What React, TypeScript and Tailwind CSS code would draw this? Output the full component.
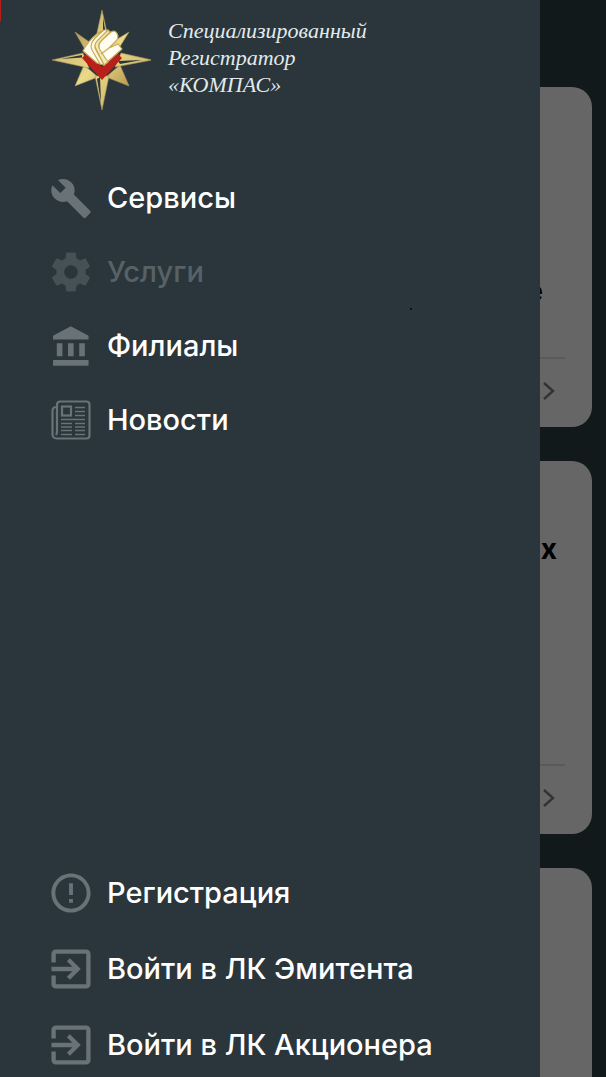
import type { ReactNode } from "react";

type IconProps = { viewBox: string; children: ReactNode };

function Icon({ viewBox, children }: IconProps) {
  return (
    <svg viewBox={viewBox} className="size-10 shrink-0 text-[#697277]" fill="currentColor" aria-hidden="true">
      {children}
    </svg>
  );
}

const wrench = (
  <Icon viewBox="0.8 0.6 22.4 22.4">
    <path d="M22.7 19l-9.1-9.1c.9-2.3.4-5-1.5-6.9-2-2-5-2.4-7.4-1.3L9 6 6 9 1.6 4.7C.4 7.1.9 10.1 2.9 12.1c1.9 1.9 4.6 2.4 6.9 1.5l9.1 9.1c.4.4 1 .4 1.4 0l2.3-2.3c.5-.4.5-1.1.1-1.4z" />
  </Icon>
);

const gear = (
  <Icon viewBox="1.7 1.7 20.6 20.6">
    <path d="M19.43 12.98c.04-.32.07-.64.07-.98s-.03-.66-.07-.98l2.11-1.65c.19-.15.24-.42.12-.64l-2-3.46c-.12-.22-.39-.3-.61-.22l-2.49 1c-.52-.4-1.08-.73-1.69-.98l-.38-2.65C14.46 2.18 14.25 2 14 2h-4c-.25 0-.46.18-.49.42l-.38 2.65c-.61.25-1.17.59-1.69.98l-2.49-1c-.23-.09-.49 0-.61.22l-2 3.46c-.13.22-.07.49.12.64l2.11 1.65c-.04.32-.07.65-.07.98s.03.66.07.98l-2.11 1.65c-.19.15-.24.42-.12.64l2 3.46c.12.22.39.3.61.22l2.49-1c.52.4 1.08.73 1.69.98l.38 2.65c.03.24.24.42.49.42h4c.25 0 .46-.18.49-.42l.38-2.65c.61-.25 1.17-.59 1.69-.98l2.49 1c.23.09.49 0 .61-.22l2-3.46c.12-.22.07-.49-.12-.64l-2.11-1.65zM12 15.5c-1.93 0-3.5-1.57-3.5-3.5s1.57-3.5 3.5-3.5 3.5 1.57 3.5 3.5-1.57 3.5-3.5 3.5z" />
  </Icon>
);

const bank = (
  <Icon viewBox="0.9 0.8 21.4 21.4">
    <path d="M4 10v7h3v-7H4zm6 0v7h3v-7h-3zM2 22h19v-3H2v3zm14-12v7h3v-7h-3zm-4.5-9L2 6v2h19V6l-9.5-5z" />
  </Icon>
);

const newspaper = (
  <Icon viewBox="0 0 40 40">
    <g fill="none" stroke="currentColor">
      <path
        strokeWidth="2.2"
        d="M6 7H5a3.500 3.500 0 0 0-3.500 3.500V34.500a4 4 0 0 0 4 4H35.500a3 3 0 0 0 3-3V4.500a3 3 0 0 0-3-3H9a3 3 0 0 0-3 3V32.500a2 2 0 0 1-1.500 2"
      />
      <rect x="11" y="6.500" width="9" height="9" strokeWidth="2.2" />
      <path
        strokeWidth="1.500"
        d="M24 7.500h10M24 11.500h10M24 15.500h10M10 19.500h24M10 23.500h11M24 23.500h10M10 27h11M24 27h10M10 30.500h11M24 30.500h10M10 34.500h11M24 34.500h10"
      />
    </g>
  </Icon>
);

const alert = (
  <Icon viewBox="1.8 1.8 20.4 20.4">
    <path d="M11 15h2v2h-2v-2zm0-8h2v6h-2V7zm.99-5C6.47 2 2 6.48 2 12s4.47 10 9.99 10C17.52 22 22 17.520 22 12S17.520 2 11.990 2zM12 20c-4.420 0-8-3.580-8-8s3.580-8 8-8 8 3.580 8 8-3.580 8-8 8z" />
  </Icon>
);

const enter = (
  <Icon viewBox="2.8 2.8 18.4 18.4">
    <path d="M10.09 15.59L11.5 17l5-5-5-5-1.41 1.41L12.67 11H3v2h9.67l-2.58 2.59zM19 3H5c-1.11 0-2 .9-2 2v4h2V5h14v14H5v-4H3v4c0 1.100.890 2 2 2h14c1.100 0 2-.9 2-2V5c0-1.100-.9-2-2-2z" />
  </Icon>
);

type Item = { label: string; icon: ReactNode; muted?: boolean };

const sections: Item[] = [
  { label: "Сервисы", icon: wrench },
  { label: "Услуги", icon: gear, muted: true },
  { label: "Филиалы", icon: bank },
  { label: "Новости", icon: newspaper },
];

const account: Item[] = [
  { label: "Регистрация", icon: alert },
  { label: "Войти в ЛК Эмитента", icon: enter },
  { label: "Войти в ЛК Акционера", icon: enter },
];

function MenuLink({ label, icon, muted }: Item) {
  return (
    <li>
      <a
        href="#"
        className={`flex h-10 items-center gap-4 text-[29px] leading-10 font-medium whitespace-nowrap text-white ${muted ? "opacity-45" : ""}`}
      >
        {icon}
        <span className={muted ? "text-[#8f979b]" : ""}>{label}</span>
      </a>
    </li>
  );
}

function Logo() {
  return (
    <svg viewBox="0 0 100 100" className="size-[100px] shrink-0" aria-hidden="true">
      <defs>
        <linearGradient id="gold" x1="0" y1="0" x2="1" y2="1">
          <stop offset="0" stopColor="#b89a5c" />
          <stop offset="0.5" stopColor="#eadb88" />
          <stop offset="1" stopColor="#b99a50" />
        </linearGradient>
      </defs>
      <g fill="url(#gold)" stroke="#a9935f" strokeWidth="0.6">
        <path d="M24 22L44 36L36 43ZM78 22L58 34L65 43ZM24 76L33 55L47 67ZM78 76L55 67L69 55Z" />
        <path d="M51 0L44 32H58ZM51 100L44 66H58ZM1 50L32 43L38 58ZM101 50L70 43L64 57Z" />
      </g>
      <path fill="#2a363b" d="M52 8L56 30L52 32ZM50 92L46 69L49 67ZM10 49L31 45L31 47.500ZM91 50L69 54L67 51Z" />
      <path fill="#b8201c" d="M36 43L31 48L51 70L71 48L66 43L51 57Z" />
      <g stroke="#c6ab55" strokeWidth="1.200" strokeLinejoin="round">
        <path fill="#fffdf2" d="M48 38Q47 33 52 29L60 22Q65 19 67 26Q67 29 65 31L58 38L67 34L71 39L53 55L47 45Z" />
        <path fill="#f3e9b4" d="M43 35Q44 30 57 20L59 22L50 31Q46 35 49 40L57 52L53 55Z" />
        <path fill="#fff9df" d="M38 37Q40 30 53 20L57 20L47 30Q42 35 45 40L53 55L49 54Z" />
        <path fill="#fffdf2" d="M32 41Q36 32 47 23L52 20L44 28Q38 35 41 40L49 54L46 53Z" />
        <path fill="none" d="M58 38L50 44" />
      </g>
    </svg>
  );
}

type CardProps = { letter?: string; className: string; letterClass?: string };

function Card({ letter, className, letterClass = "" }: CardProps) {
  return (
    <article className={`flex flex-col rounded-[20px] bg-[#666666] px-[27px] ${className}`}>
      {letter && (
        <>
          <h2 className={`text-right text-[28px] leading-8 font-bold text-black ${letterClass}`}>{letter}</h2>
          <div className="mt-auto flex h-[70px] items-center justify-end border-t-2 border-[#5a5a5a] pr-2 pb-1">
            <svg viewBox="0 0 16 20" className="h-5 w-4" fill="none" stroke="#333333" strokeWidth="2.4" aria-hidden="true">
              <path d="M3 2L12 10L3 18" />
            </svg>
          </div>
        </>
      )}
    </article>
  );
}

export default function App() {
  return (
    <div className="relative h-screen min-h-[900px] overflow-hidden bg-[#12191b] font-['Inter','Liberation_Sans',sans-serif]">
      <main className="flex flex-col gap-[34px] px-[14px] pt-[87px]">
        <Card letter="е" className="h-[340px] pt-[188px]" letterClass="pr-[22px]" />
        <Card letter="х" className="h-[373px] pt-[72px]" letterClass="pr-2" />
        <Card className="h-[373px]" />
      </main>

      <aside className="absolute inset-y-0 right-[66px] left-0 flex flex-col bg-[#2a363b] pt-[10px] pb-3 pl-[51px]">
        <span className="absolute top-0 left-0 h-[21px] w-px bg-[#b51f1b]" />
        <span className="absolute top-[308px] left-[410px] size-[2px] bg-[#0b1216]" />
        <a href="#" className="flex items-start gap-[17px]">
          <Logo />
          <span className="pt-[7px] font-['Liberation_Serif',serif] text-[22px] leading-[27px] text-[#e3eaec] italic">
            Специализированный
            <br />
            Регистратор
            <br />
            «КОМПАС»
          </span>
        </a>
        <nav className="mt-[68px] flex flex-1 flex-col justify-between">
          <ul className="flex flex-col gap-[34px]">
            {sections.map((item) => (
              <MenuLink key={item.label} {...item} />
            ))}
          </ul>
          <ul className="flex flex-col gap-9">
            {account.map((item) => (
              <MenuLink key={item.label} {...item} />
            ))}
          </ul>
        </nav>
      </aside>
    </div>
  );
}
